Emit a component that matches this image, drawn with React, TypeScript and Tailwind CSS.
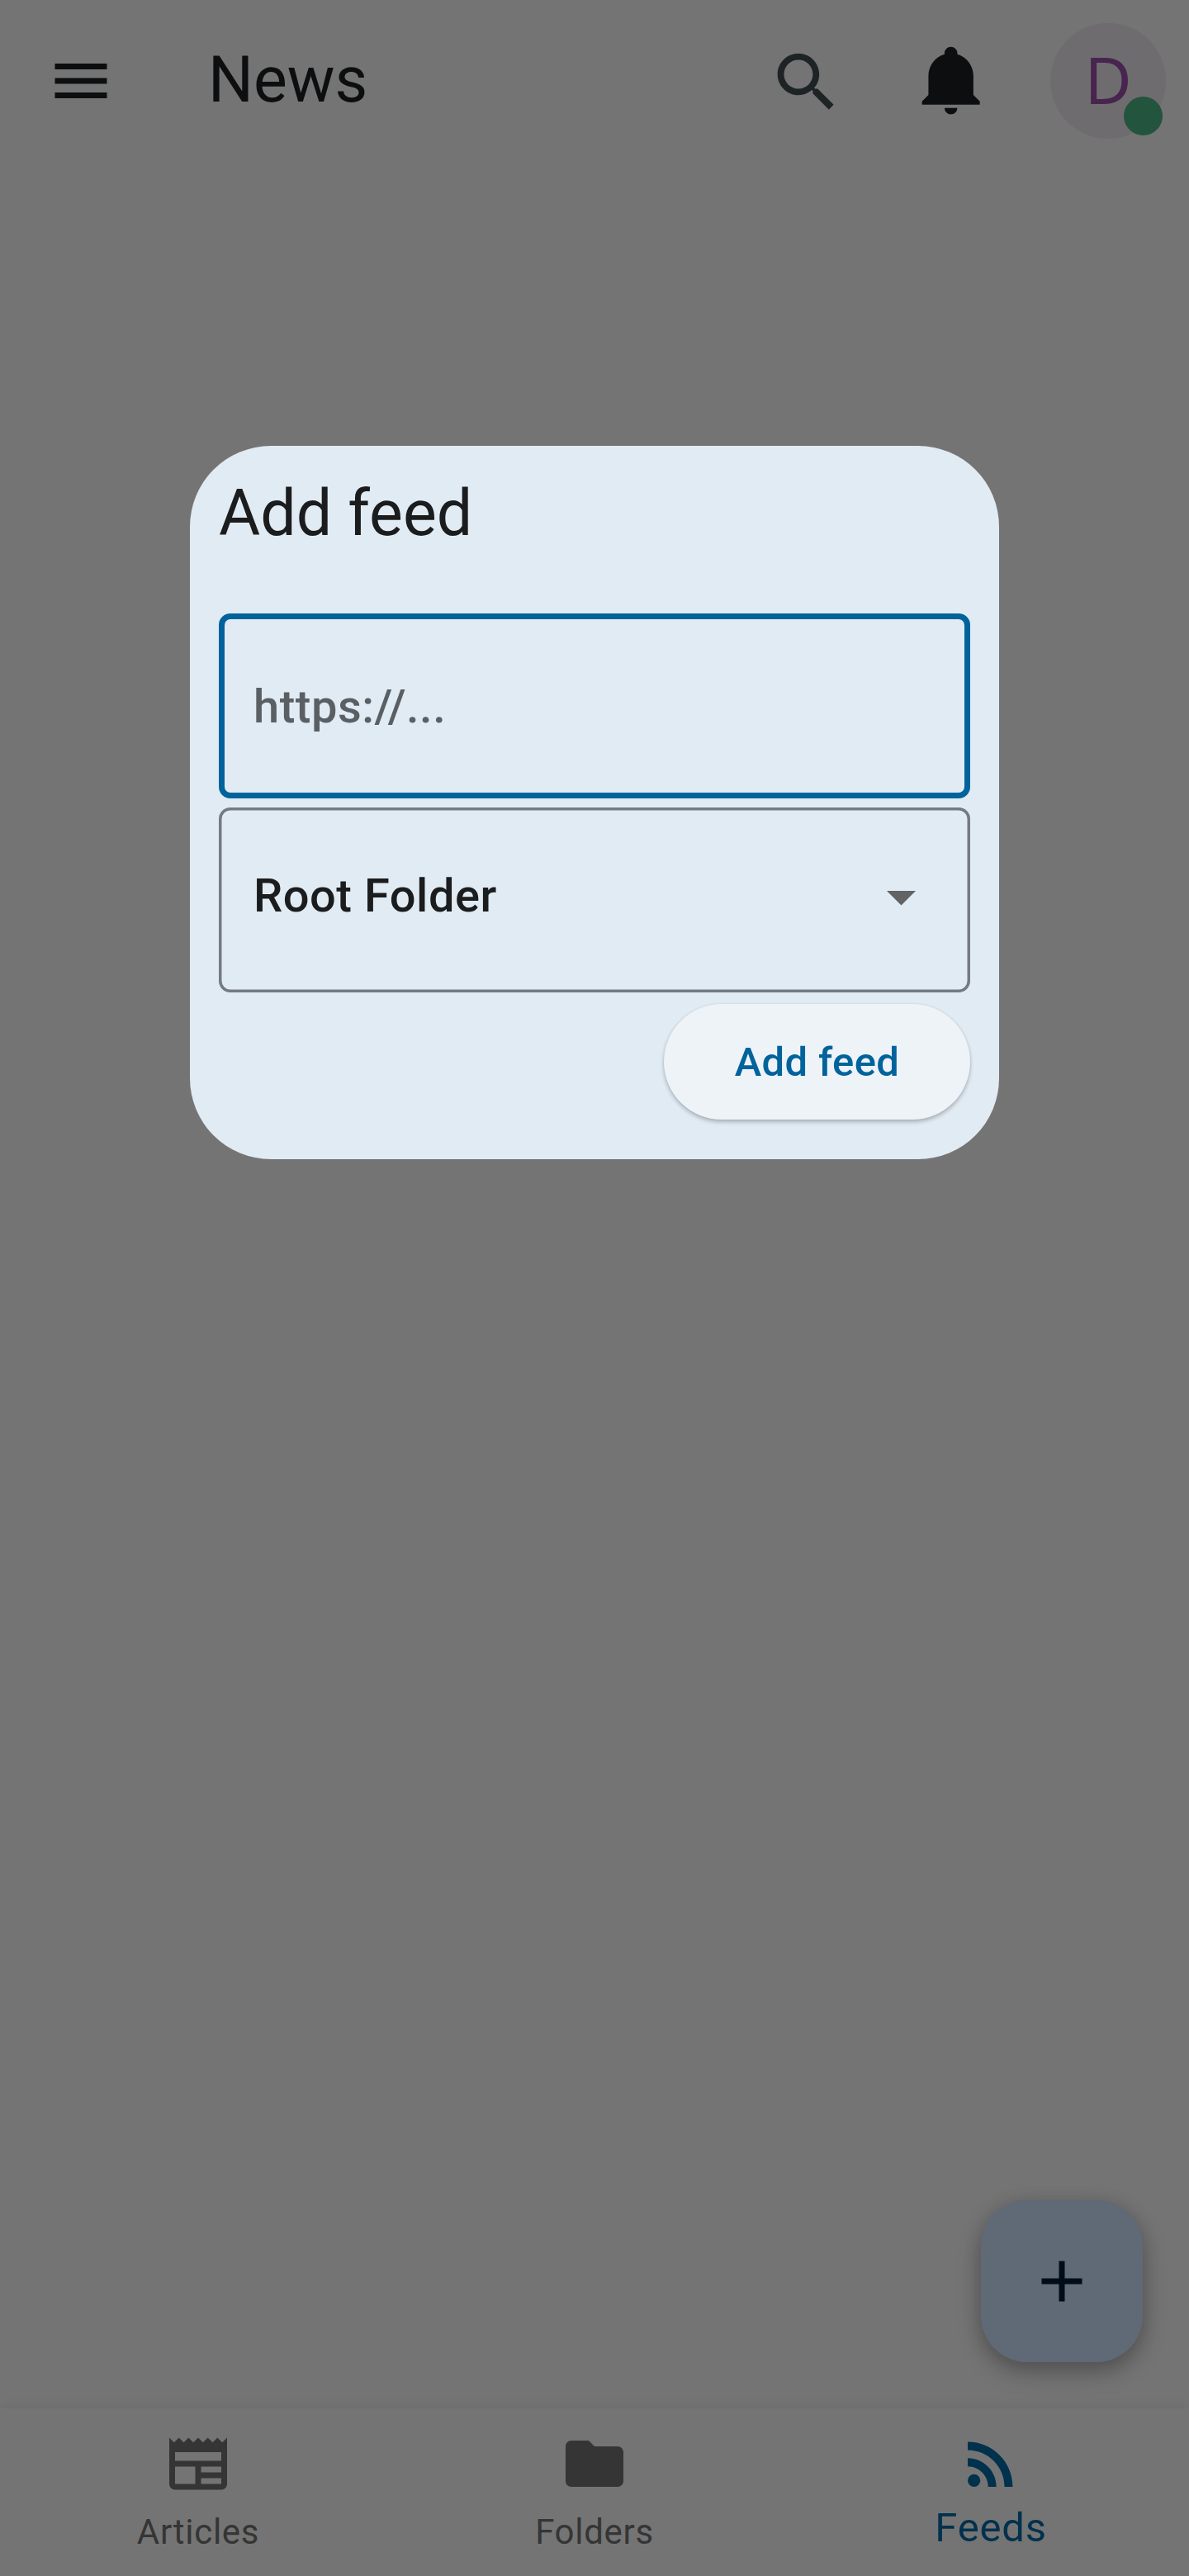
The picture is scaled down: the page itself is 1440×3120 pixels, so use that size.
import type { ReactNode } from 'react';

function Icon({ children, className }: { children: ReactNode; className: string }) {
  return (
    <svg viewBox="0 0 24 24" fill="currentColor" aria-hidden="true" className={`shrink-0 ${className}`}>
      {children}
    </svg>
  );
}

function Header() {
  return (
    <header className="flex h-[196px] shrink-0 items-center pr-7 pl-14">
      <button aria-label="Menu" className="text-[#0c0e0f]">
        <Icon className="size-[84px]">
          <path d="M3 18h18v-2H3v2zm0-5h18v-2H3v2zm0-7v2h18V6H3z" />
        </Icon>
      </button>
      <h1 className="ml-[112px] flex-1 pb-[2px] text-[77px] leading-[90px] text-[#0c0e0f]">News</h1>
      <button aria-label="Search" className="mr-[81.7px] pt-[2.5px] text-[#1e2326]">
        <Icon className="size-[93.3px]">
          <path d="M15.5 14h-.79l-.28-.27C15.41 12.59 16 11.11 16 9.5 16 5.91 13.09 3 9.5 3S3 5.91 3 9.5 5.91 16 9.5 16c1.61 0 3.09-.59 4.23-1.57l.27.28v.79l5 4.99L20.49 19l-4.99-5zm-6 0C7.01 14 5 11.99 5 9.5S7.01 5 9.5 5 14 7.01 14 9.5 11.99 14 9.5 14z" />
        </Icon>
      </button>
      <button aria-label="Notifications" className="mr-[73.7px] pb-[4px] text-[#0c0e0f]">
        <Icon className="size-[93.3px]">
          <path d="M21 19v1H3v-1l2-2v-6c0-3.1 2.03-5.83 5-6.71V4a2 2 0 0 1 4 0v.29c2.97.88 5 3.61 5 6.71v6l2 2m-7 2a2 2 0 0 1-4 0" />
        </Icon>
      </button>
      <div className="relative flex size-[140px] shrink-0 items-center justify-center rounded-full bg-[#6f6c70] pb-[5px]">
        <span className="font-['Noto_Sans',sans-serif] text-[78.4px] leading-[107px] text-[#47254e]">D</span>
        <span className="absolute right-[4.5px] bottom-[4.5px] size-[47px] rounded-full bg-[#23543d]" />
      </div>
    </header>
  );
}

function AddFeedDialog() {
  return (
    <section
      role="dialog"
      aria-label="Add feed"
      className="absolute top-[539.5px] left-[230px] flex h-[864.5px] w-[980px] flex-col rounded-[98px] bg-[#e1ebf4] px-[35px] pt-[37.5px]"
    >
      <h2 className="text-[77px] leading-[90px] text-[#1b1c1d]">Add feed</h2>
      <div className="mt-[76px] flex h-[224px] shrink-0 items-center rounded-[14px] border-[7px] border-[#00639b] px-[35px] pt-[2px]">
        <span className="text-[56px] leading-[66px] font-medium tracking-[0.525px] text-[#5a5f63]">https://...</span>
      </div>
      <div className="mt-[10.5px] flex h-[224px] shrink-0 items-center justify-between rounded-[14px] pr-[66px] pl-[42px] shadow-[inset_0_0_0_3.5px_#747a85]">
        <span className="pb-[9px] text-[56px] leading-[66px] font-medium tracking-[0.525px] text-[#1b1c1d]">
          Root Folder
        </span>
        <svg viewBox="0 0 10 5" fill="#636363" aria-hidden="true" className="mb-[3px] h-[17.5px] w-[35px]">
          <path d="M0 0h10L5 5z" />
        </svg>
      </div>
      <button className="mt-[14px] flex h-[140px] w-[371px] shrink-0 items-center justify-center self-end rounded-full bg-[#eef3f8] pt-[2px] text-[49px] leading-[57px] font-medium tracking-[0.35px] text-[#00639b] shadow-[0_3px_5px_rgba(0,0,0,0.24),0_0_3px_rgba(0,0,0,0.08)]">
        Add feed
      </button>
    </section>
  );
}

function BottomNav() {
  return (
    <nav className="grid h-[203px] shrink-0 grid-cols-3 bg-[#747474] pt-[25px] text-[#353535] shadow-[0_-2px_12px_rgba(0,0,10,0.07)]">
      <a className="flex flex-col items-center gap-4">
        <Icon className="size-[84px]">
          <path d="M22 3l-1.67 1.67L18.67 3 17 4.67 15.33 3l-1.66 1.67L12 3l-1.67 1.67L8.67 3 7 4.67 5.33 3 3.67 4.67 2 3v16c0 1.1.9 2 2 2h16c1.1 0 2-.9 2-2V3zM11 19H4v-6h7v6zm9 0h-7v-2h7v2zm0-4h-7v-2h7v2zm0-4H4V8h16v3z" />
        </Icon>
        <span className="text-[42px] leading-[49px] tracking-[0.7px]">Articles</span>
      </a>
      <a className="flex flex-col items-center gap-4">
        <Icon className="size-[84px]">
          <path d="M10 4H4c-1.1 0-1.99.9-1.99 2L2 18c0 1.1.9 2 2 2h16c1.1 0 2-.9 2-2V8c0-1.1-.9-2-2-2h-8l-2-2z" />
        </Icon>
        <span className="text-[42px] leading-[49px] tracking-[0.7px]">Folders</span>
      </a>
      <a className="flex flex-col items-center gap-[7px] text-[#00314d]">
        <Icon className="size-[84px]">
          <circle cx="6.18" cy="17.82" r="2.18" />
          <path d="M4 4.44v2.83c7.03 0 12.73 5.7 12.73 12.73h2.83c0-8.59-6.97-15.56-15.56-15.56zm0 5.66v2.83c3.9 0 7.07 3.17 7.07 7.07h2.83c0-5.47-4.43-9.9-9.9-9.9z" />
        </Icon>
        <span className="text-[49px] leading-[57px] tracking-[0.8px]">Feeds</span>
      </a>
    </nav>
  );
}

export default function App() {
  return (
    <div className="relative flex h-[3120px] w-[1440px] flex-col overflow-hidden bg-[#747474] font-['Roboto',sans-serif]">
      <Header />
      <main className="flex flex-1 items-end justify-end p-14">
        <button
          aria-label="Add"
          className="flex size-[196px] items-center justify-center rounded-[56px] bg-[#606a76] text-[#000d18] shadow-[0_12px_28px_rgba(0,0,0,0.26),0_2px_21px_rgba(0,0,0,0.1)]"
        >
          <Icon className="size-[84px]">
            <path d="M19 13h-6v6h-2v-6H5v-2h6V5h2v6h6v2z" />
          </Icon>
        </button>
      </main>
      <BottomNav />
      <AddFeedDialog />
    </div>
  );
}
